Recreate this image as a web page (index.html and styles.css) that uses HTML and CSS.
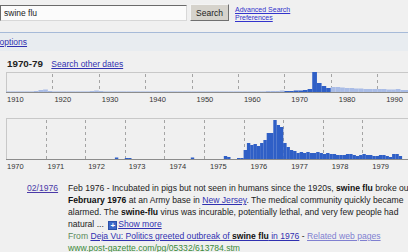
FILE: index.html
```html
<!DOCTYPE html>
<html lang="en">

<head>
  <meta charset="UTF-8">
  <title>swine flu - Timeline</title>
  <link rel="stylesheet" href="styles.css">
</head>

<body>
  <div class="top">
    <input type="text" class="q" value="swine flu" />
    <button class="go">Search</button>
    <div class="links">
      <a href="#">Advanced Search</a><br>
      <a href="#">Preferences</a>
    </div>
  </div>

  <div class="optbar">
    <a href="#" class="opts">Show options</a>
  </div>

  <div class="range">
    <b>1970-79</b>
    <a href="#">Search other dates</a>
  </div>

  <div class="chart">
    <svg id="decades" width="402" height="21"></svg>
    <div class="ticks decade">
      <span>1910</span><span>1920</span><span>1930</span><span>1940</span><span>1950</span>
      <span>1960</span><span>1970</span><span>1980</span><span>1990</span>
    </div>
  </div>

  <div class="chart big">
    <svg id="months" width="402" height="42"></svg>
    <div class="ticks year">
      <span>1970</span><span>1971</span><span>1972</span><span>1973</span><span>1974</span>
      <span>1975</span><span>1976</span><span>1977</span><span>1978</span><span>1979</span>
    </div>
  </div>

  <div class="result">
    <a href="#" class="date">02/1976</a>
    <div class="snippet">
      Feb 1976 - Incubated in pigs but not seen in humans since the 1920s, <b>swine flu</b> broke out in<br>
      <b>February 1976</b> at an Army base in <a href="#">New Jersey</a>. The medical community quickly became<br>
      alarmed. The <b>swine-flu</b> virus was incurable, potentially lethal, and very few people had<br>
      natural ... <span class="plus">+</span><a href="#">Show more</a><br>
      <span class="from">From <a href="#">Deja Vu: Politics greeted outbreak of <b>swine flu</b> in 1976</a></span>
      - <a href="#" class="related">Related web pages</a><br>
      <span class="url">www.post-gazette.com/pg/05332/613784.stm</span>
    </div>
  </div>

  <script>
    const NS = 'http://www.w3.org/2000/svg';

    function add(svg, tag, attrs) {
      const el = document.createElementNS(NS, tag);
      for (const k in attrs) el.setAttribute(k, attrs[k]);
      svg.appendChild(el);
    }

    function frame(svg, h, step, count) {
      add(svg, 'rect', { x: 0.5, y: 0.5, width: 420, height: h - 1, fill: 'none', stroke: '#c8c8c8' });
      for (let i = 1; i < count; i++) {
        const x = Math.round(i * step) + 0.5;
        add(svg, 'line', { x1: x, y1: 2, x2: x, y2: h, stroke: '#a4a4a4', 'stroke-dasharray': '3,3' });
      }
    }

    // decades chart 1910 - 1996
    const dec = document.getElementById('decades');
    frame(dec, 21, 46.4, 9);
    const light = {
      1916: 1, 1917: 2, 1918: 2.5, 1919: 1, 1928: 1, 1929: 1.5, 1930: 1,
      1966: 1, 1967: 1, 1968: 1, 1969: 1.5,
      1980: 5, 1981: 5, 1982: 4.5, 1983: 4, 1984: 4, 1985: 3.5, 1986: 3.5, 1987: 3,
      1988: 3, 1989: 3, 1990: 3, 1991: 3, 1992: 2.5, 1993: 2.5, 1994: 3, 1995: 2, 1996: 2
    };
    const dark = [1, 1, 1.5, 1.5, 2, 3, 20, 9, 6, 4];
    for (let y = 1910; y <= 1996; y++) {
      const x = (y - 1910) * 4.64;
      let v = light[y] || 0.6;
      let col = '#a9bce6';
      if (y >= 1970 && y <= 1979) { v = dark[y - 1970]; col = '#2f5fc6'; }
      add(dec, 'rect', { x: x, y: 20 - v, width: 4.7, height: v, fill: col });
    }
    add(dec, 'line', { x1: 0, y1: 20.5, x2: 402, y2: 20.5, stroke: '#8c8c8c' });

    // monthly chart 1970 - 1979
    const mon = document.getElementById('months');
    frame(mon, 42, 39.6, 10);
    const months = {};
    months[1972 * 12 + 9] = 1.5;
    months[1973 * 12 + 0] = 1;
    months[1973 * 12 + 1] = 1;
    months[1974 * 12 + 8] = 1.5;
    months[1975 * 12 + 6] = 3;
    months[1975 * 12 + 7] = 2;
    months[1975 * 12 + 10] = 1;
    months[1975 * 12 + 11] = 1;
    const flu = [
      9, 16, 14, 15, 13, 16, 19, 26, 26, 39, 34, 32,
      16, 12, 9, 8, 6, 7, 6, 7, 6, 6, 7, 6,
      5, 6, 5, 5, 4, 4, 4, 5, 5, 4, 3, 4,
      5, 4, 4, 3, 3, 4, 4, 3, 2, 5, 5, 3
    ];
    flu.forEach((v, i) => { months[1976 * 12 + i] = v; });
    for (const k in months) {
      const x = (k - 1970 * 12) * 3.3;
      const v = months[k];
      add(mon, 'rect', { x: x, y: 41 - v, width: 3.4, height: v, fill: '#2f5fc6' });
    }
    add(mon, 'line', { x1: 0, y1: 41.5, x2: 402, y2: 41.5, stroke: '#8c8c8c' });
  </script>
</body>

</html>
```

FILE: styles.css
```css
body {
  margin: 0;
  background-color: #f0f0f0;
  font-family: 'Liberation Sans', Arial, sans-serif;
  color: #222;
  overflow: hidden;
  width: 408px;
}

a {
  color: #3030b0;
}

.top {
  display: flex;
  align-items: flex-start;
  height: 27px;
  padding-top: 5px;
}

.q {
  box-sizing: border-box;
  width: 187px;
  height: 16px;
  margin: 0;
  padding: 0 3px;
  border: 1px solid;
  border-color: #6a6a6a #d8d8d8 #d8d8d8 #6a6a6a;
  background: #fbfbfb;
  font-family: inherit;
  font-size: 8.5px;
  color: #222;
}

.go {
  box-sizing: border-box;
  width: 39px;
  height: 17px;
  margin: -1px 0 0 3px;
  padding: 0;
  border: 1px solid;
  border-color: #f4f4f4 #707070 #707070 #f4f4f4;
  background: #d6d3cc;
  font-family: inherit;
  font-size: 8.5px;
  color: #222;
}

.links {
  margin: 1px 0 0 6px;
  font-size: 7px;
  line-height: 8px;
}

.links a {
  color: #3333cc;
}

.optbar {
  height: 18px;
  border-top: 1px solid #a6bad8;
  background: #e8ecf0;
  font-size: 8.5px;
  line-height: 18px;
  overflow: hidden;
}

.opts {
  display: inline-block;
  margin-left: -24px;
}

.range {
  padding: 5px 0 0 7px;
  height: 16px;
  font-size: 8.5px;
  line-height: 16px;
}

.range b {
  font-size: 9.8px;
  margin-right: 6px;
}

.chart {
  margin: 0 0 0 6px;
  height: 32px;
}

.chart svg {
  display: block;
}

.chart.big {
  margin-top: 14px;
  height: 64px;
}

.ticks {
  display: flex;
  padding-top: 1px;
  font-size: 7.5px;
  line-height: 11px;
  color: #333;
  white-space: nowrap;
}

.decade span {
  flex: 0 0 46.4px;
  padding-left: 1px;
}

.year span {
  flex: 0 0 39.6px;
  padding-left: 1px;
}

.result {
  display: flex;
  font-size: 8.6px;
  line-height: 12px;
  white-space: nowrap;
}

.date {
  flex: 0 0 41px;
  padding-left: 27px;
  color: #4a3aa8;
}

.snippet b {
  color: #111;
}

.plus {
  display: inline-block;
  width: 7px;
  height: 7px;
  margin: 0 1px 0 2px;
  border: 1px solid #2a4fa8;
  background: #3c68c8;
  color: white;
  font-size: 8px;
  font-weight: bold;
  line-height: 7px;
  text-align: center;
  vertical-align: -1px;
}

.from {
  color: #5a8a5a;
}

.from a {
  color: #3030b0;
}

.related {
  color: #8080d0;
}

.url {
  color: #3a8a3a;
}
```
